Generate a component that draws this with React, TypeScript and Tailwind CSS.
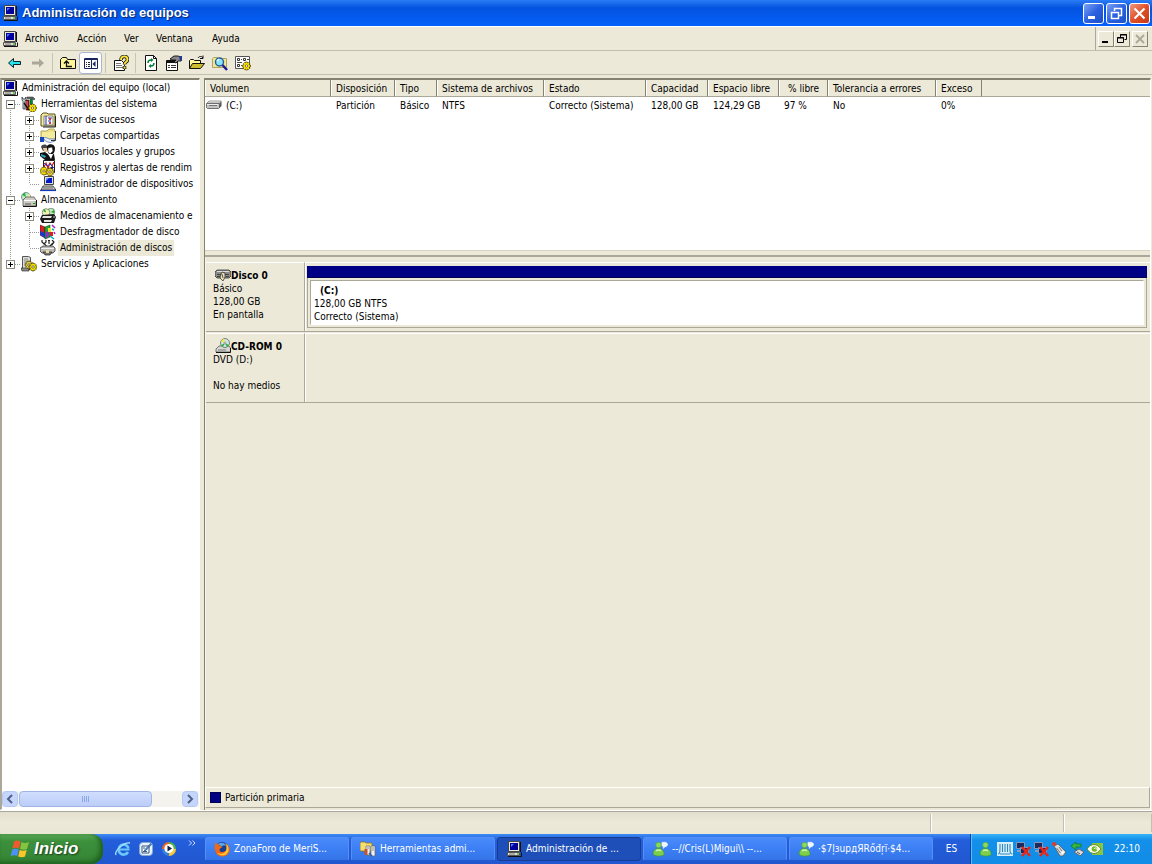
import React from "react";

type P = { children: React.ReactNode; className?: string };

function Icon({ children, className = "h-4 w-4" }: P) {
  return (
    <svg viewBox="0 0 16 16" className={`shrink-0 ${className}`} aria-hidden="true">
      {children}
    </svg>
  );
}

const Gear = ({ x, y, fill = "#ffe400" }: { x: number; y: number; fill?: string }) => (
  <g transform={`translate(${x} ${y})`}>
    <path d="M3 0h2v1l1-.5 1.200 1.200-.6 1.300h1.400v2H6.600l.6 1.300L6 7.500 5 7v1H3V7l-1 .5L.8 6.300 1.400 5H0V3h1.400L.8 1.700 2 .5l1 .5z" fill={fill} stroke="#3a3000" strokeWidth=".6" />
    <circle cx="4" cy="4" r="1.200" fill="#fff" stroke="#3a3000" strokeWidth=".6" />
  </g>
);

const Computer = ({ className }: { className?: string }) => (
  <Icon className={className}>
    <path d="M2.500.5h11v10h-11z" fill="#ece9d8" stroke="#444" />
    <path d="M4 2h8v7H4z" fill="#00009c" />
    <path d="M5 3h3L5 6z" fill="#4a74f0" />
    <path d="M1.500 11.500h12v3h-12z" fill="#e4e1d4" stroke="#555" />
    <path d="M3 13h6" stroke="#777" />
    <path d="M11 13h2" stroke="#0a0" />
    <path d="M2 15.500h13.500v-4M14.500 1v10" stroke="#111" fill="none" />
  </Icon>
);
const Tools = () => (
  <Icon>
    <path d="M1 1l1 2h2l1-2v3L4 5.500V13H2V5.500L1 4z" fill="#c4d8d8" stroke="#223" strokeWidth=".7" />
    <path d="M5 4h3v10H5z" fill="#b01010" stroke="#300" strokeWidth=".6" />
    <path d="M6 5v8" stroke="#f08080" />
    <path d="M6 1h6l2 2-1 1-2-1.500H6z" fill="#666" stroke="#222" strokeWidth=".5" />
    <path d="M9 3h2.500v7H9z" fill="#008a3c" stroke="#042" strokeWidth=".5" />
    <path d="M3 7l5 7" stroke="#111" strokeWidth="1.300" />
    <Gear x={7.500} y={8} />
  </Icon>
);
const EventLog = () => (
  <Icon>
    <path d="M1 3l2-2h4l1 1h7v12H1z" fill="#f5eb9b" stroke="#55501a" />
    <path d="M4 4h9v9H4z" fill="#fff" stroke="#666" strokeWidth=".8" />
    <path d="M6 4v9M8 6h4M8 9h3" stroke="#2232a8" />
    <path d="M9 6h2v2H9zM9 10h2v2H9z" fill="#e03030" />
    <path d="M15.500 4v11H3" fill="none" stroke="#222" />
  </Icon>
);
const Share = () => (
  <Icon>
    <path d="M1 3h6l2-2h5l1 2v9H1z" fill="#eee08a" stroke="#a2943a" strokeWidth=".8" />
    <path d="M2 4h13v6H2z" fill="#f5eb9c" />
    <path d="M3 10c3-1 4 0 6 1h6v2l-5 1.500-4-1z" fill="#e8f1fb" stroke="#4e6ea5" strokeWidth=".7" />
    <path d="M0 9h4v5H0z" fill="#1646c0" />
    <path d="M15.500 3v9.500H11" fill="none" stroke="#333" />
  </Icon>
);
const Users = () => (
  <Icon>
    <path d="M1 3c1-3 5-3 6-1v5H3z" fill="#444" />
    <path d="M3 4h4v4H4z" fill="#e9c8a0" />
    <path d="M7 2c2-3 8-2 8 2 0 3-1 5-2 6H9L7 5z" fill="#111" />
    <path d="M8 4l4-1 1 4-3 3-2-2z" fill="#fff" stroke="#222" strokeWidth=".5" />
    <path d="M0 9l5-1 4 3 5-1 1 6H5L0 12z" fill="#111" />
    <path d="M8 10l3 5 2-5z" fill="#fff" />
    <path d="M1 10l5 2-1 2-4-2z" fill="#2aa4b8" />
  </Icon>
);
const PerfLogs = () => (
  <Icon>
    <path d="M3.500.500h11v12h-11z" fill="#fff" stroke="#222" />
    <path d="M4 7l2-4 2 5 2-5 2 3 2-4" fill="none" stroke="#d00000" strokeWidth="1.100" />
    <path d="M4 3l3 3 3-2 4 4" fill="none" stroke="#2244d0" />
    <Gear x={0} y={7} />
    <path d="M8 9l5-3v8H9z" fill="#1d1d60" />
    <Gear x={6} y={8} fill="#e8cd33" />
  </Icon>
);
const Devices = () => (
  <Icon>
    <path d="M4.500.500h9v8h-9z" fill="#ddd" stroke="#444" />
    <path d="M6 2h6v5H6z" fill="#0018c8" />
    <path d="M6 2h3l-3 3z" fill="#6d92ff" />
    <path d="M3 10h10l3 4H1z" fill="#cfcfc8" stroke="#222" strokeWidth=".8" />
    <path d="M3 12h10" stroke="#666" />
    <path d="M0 14.500h16" stroke="#1038c0" strokeWidth="1.200" />
  </Icon>
);
const Storage = () => (
  <Icon>
    <circle cx="5" cy="5" r="4.500" fill="#c4ecc9" stroke="#678" strokeWidth=".8" />
    <path d="M5 5L1 3l3-2.500zM5 5l4 2-1 2z" fill="#26b33c" />
    <path d="M5 5L8.500 2l1 3z" fill="#f6f19b" />
    <path d="M2 8l3-3h8l2 3v6H2z" fill="#cfccc4" stroke="#555" strokeWidth=".8" />
    <path d="M3 8.500h12" stroke="#fff" />
    <path d="M2 14.500h13.500V8" stroke="#111" fill="none" />
    <path d="M4 12h6" stroke="#555" />
    <path d="M12 11h2v1h-2z" fill="#0a0" />
  </Icon>
);
const Removable = () => (
  <Icon>
    <circle cx="11" cy="4" r="3.800" fill="#bfe9be" stroke="#575" strokeWidth=".7" />
    <circle cx="6" cy="4.500" r="3.800" fill="#f1f3b0" stroke="#575" strokeWidth=".7" />
    <path d="M6 4.500L3 3l2-2zM11 4l3-2v3z" fill="#20a038" />
    <path d="M2 7l12-1 2 3-2 6H2l-2-4z" fill="#1b1b1b" />
    <path d="M3 8h9l-1 2H2zM4 12h8l-1 2H4z" fill="#e6e6e2" />
    <path d="M13 9h2" stroke="#ccc" />
  </Icon>
);
const Defrag = () => (
  <Icon>
    <path d="M0 1l5 2v11l-5-3z" fill="#d82020" stroke="#400" strokeWidth=".5" />
    <path d="M5 3l5-2v12l-5 2z" fill="#18a83c" stroke="#030" strokeWidth=".5" />
    <path d="M0 7l5 2v5l-5-3z" fill="#2038c8" />
    <path d="M6 8l3-1v5l-3 2z" fill="#9b2cc0" />
    <path d="M8 4h3v4H8z" fill="#f4e327" />
    <path d="M10 8h3v4h-3z" fill="#d82020" />
    <path d="M12 1l3 3M14 8l1 2" stroke="#b020c0" strokeWidth="1.500" />
    <path d="M10 12l4 3M12 5l2 1" stroke="#00a8b8" strokeWidth="1.500" />
  </Icon>
);
const DiskMgmt = () => (
  <Icon>
    <path d="M2 0v2l2 2 2-2V0M9 0v4M8 .5h2M12 0l2 2-2 3M4 3l3 4M13 3l-4 4" fill="none" stroke="#222" strokeWidth="1.200" />
    <path d="M3 6h10l2 2v3l-2 2H2L0 11V8z" fill="#b8b8b4" stroke="#333" strokeWidth=".8" />
    <path d="M1 8.500h13" stroke="#eee" />
    <path d="M3 12h9l-2 3H5z" fill="#777" stroke="#222" strokeWidth=".7" />
    <path d="M6 10h3v3H6z" fill="#e9dc9a" />
  </Icon>
);
const Services = () => (
  <Icon>
    <path d="M1.500.500h6l2 1v12h-8z" fill="#deddd5" stroke="#555" />
    <path d="M3 3h4M3 5h4M3 7h4" stroke="#888" />
    <path d="M0 12h8v3H1z" fill="#8c8c88" stroke="#222" strokeWidth=".6" />
    <Gear x={4} y={5} fill="#d8c850" />
    <Gear x={8} y={7} fill="#f0e000" />
  </Icon>
);
const Drive = () => (
  <Icon>
    <path d="M1 5l2-2h12l-1 2z" fill="#f2f2f2" stroke="#777" strokeWidth=".7" />
    <path d="M.5 5.500h13v4l-1 1h-11l-1-1z" fill="#c3c3c3" stroke="#555" strokeWidth=".8" />
    <path d="M14 5l1.500-2v5L13 10.500z" fill="#555" />
    <path d="M3 7.500h8" stroke="#777" />
    <path d="M1 6.500h11" stroke="#eee" />
  </Icon>
);
const Disk = () => (
  <Icon>
    <path d="M0 5l2-2h12l2 2v4l-2 2H2L0 9z" fill="#8c8c8c" stroke="#333" strokeWidth=".8" />
    <path d="M2 4.500h12" stroke="#ddd" />
    <path d="M2 7.500h4M10 7.500h4M2 9.500h3M11 9.500h3" stroke="#444" />
    <path d="M7 5l3 1v4l-2 4-3-3 1-4z" fill="#eee3b2" stroke="#333" strokeWidth=".8" />
    <path d="M7 7l1 4" stroke="#555" />
  </Icon>
);
const CdRom = () => (
  <Icon>
    <path d="M1 11l3-3h10l1.500 2v4H1z" fill="#d8d8d4" stroke="#555" strokeWidth=".8" />
    <path d="M1 14.500h14.500V10" stroke="#111" fill="none" />
    <path d="M3 12h8" stroke="#777" />
    <circle cx="10" cy="5" r="4.500" fill="#cfe7e3" stroke="#555" strokeWidth=".7" />
    <path d="M10 5L6 3l3-2.500z" fill="#f0e840" />
    <path d="M10 5l4 2-2 2.200zM10 5L6 7l2 2z" fill="#2fb048" />
    <circle cx="10" cy="5" r="1" fill="#fff" stroke="#555" strokeWidth=".5" />
  </Icon>
);

const Back = () => (
  <Icon><path d="M1.500 8L6.500 3.500v3h7v3h-7v3z" fill="#22e6ee" stroke="#08252b" strokeLinejoin="round" /></Icon>
);
const Forward = () => (
  <Icon><path d="M14 8L9 3.500v3H2v3h7v3z" fill="#aaa79b" /></Icon>
);
const UpFolder = () => (
  <Icon>
    <path d="M.5 4.500l2-2h4l1 2h8v9H.500z" fill="#fff59b" stroke="#111" />
    <path d="M6.500 6v5.500H12M4 8.500L6.500 6 9 8.500" fill="none" stroke="#111" strokeWidth="1.300" />
  </Icon>
);
const ShowTree = () => (
  <Icon>
    <path d="M1.500 3.500h13v10h-13z" fill="#fff" stroke="#16255f" />
    <path d="M2 4h12v1H2z" fill="#16255f" />
    <path d="M8.500 4v9" stroke="#16255f" />
    <path d="M3 7.500h1m1 0h2M3 9.500h1m1 0h2M3 11.500h1m1 0h2" stroke="#222" />
    <path d="M12.500 6v6l-3-3z" fill="#16255f" />
  </Icon>
);
const HelpSheet = () => (
  <Icon>
    <path d="M1.500 5.500h7l3 3v7h-10z" fill="#fff" stroke="#111" />
    <path d="M3 8.500h5M3 10.500h6M3 12.500h7" stroke="#777" />
    <path d="M8 5c0-5 6.500-4.500 6.500-.500 0 3-3 2-3 5M11.500 11v3" fill="none" stroke="#222" strokeWidth="3.600" />
    <path d="M8 5c0-5 6.500-4.500 6.500-.500 0 3-3 2-3 5M11.500 11.500v2" fill="none" stroke="#ffe736" strokeWidth="1.900" />
  </Icon>
);
const Refresh = () => (
  <Icon>
    <path d="M2.500.5h8l3 3v12h-11z" fill="#fff" stroke="#111" />
    <path d="M10.500.500v3h3" fill="none" stroke="#111" />
    <path d="M5 8c0-2 1-3 3-3M11 8c0 2-1 3-3 3" fill="none" stroke="#008038" strokeWidth="1.400" />
    <path d="M8 3v4l2.500-2zM8 9v4l-2.500-2z" fill="#008038" />
  </Icon>
);
const Props = () => (
  <Icon>
    <path d="M.5 5.500h11v10H.500z" fill="#fff" stroke="#111" />
    <path d="M1 6h10v2H1z" fill="#111" />
    <path d="M2 10.500h2m1 0h5M2 12.500h2m1 0h5" stroke="#333" />
    <path d="M4 4l4-3h4l3 1v4h-3l-2 2-2-1 2-2H6z" fill="#888" stroke="#111" strokeWidth=".9" />
    <path d="M13 1h3v5h-2z" fill="#25368b" />
  </Icon>
);
const OpenFolder = () => (
  <Icon>
    <path d="M.5 13.500v-8l1-1h3l1 1h6v3" fill="#fff59b" stroke="#111" />
    <path d="M.500 13.500l3-5h12l-4 5z" fill="#cdbd2e" stroke="#111" />
    <path d="M9 3c1-2 4-2 5 0m0-2.500v3h-3" fill="none" stroke="#111" />
  </Icon>
);
const Find = () => (
  <Icon>
    <path d="M.500 12.500v-9l1-1h4l1 1h8v9z" fill="#efe699" stroke="#b1a55a" />
    <circle cx="7.500" cy="7" r="4" fill="#8ce3fb" stroke="#235b9b" strokeWidth="1.400" />
    <path d="M5 6l2-2" stroke="#fff" strokeWidth="1.200" />
    <path d="M10.500 10l4.500 5" stroke="#1c1c94" strokeWidth="2.400" />
  </Icon>
);
const Settings = () => (
  <Icon>
    <path d="M.500 1.500h14v12H.500z" fill="#fff" stroke="#555" />
    <path d="M2.500 3.500h2v2h-2zM2.500 9.500h2v2h-2zM8.500 3.500h2v2h-2z" fill="none" stroke="#333" />
    <path d="M6 4.500h1M6 10.500h1M12 4.500h2M2 7.500h5" stroke="#444" />
    <Gear x={7.500} y={7} />
  </Icon>
);

const IE = () => (
  <Icon>
    <path d="M13 11a5 5 0 1 1 .5-3.500" fill="none" stroke="#68c8fb" strokeWidth="2.600" />
    <path d="M1 14C-1 10 9 1 15 2" fill="none" stroke="#a9e2fe" strokeWidth="1.300" />
    <path d="M4 8.500h10.500" stroke="#68c8fb" strokeWidth="2" />
  </Icon>
);
const Desktop = () => (
  <Icon>
    <rect x="1.500" y="1.500" width="13" height="13" rx="3.500" fill="#e9f2fc" stroke="#86aad8" />
    <path d="M4 5h7v7H4z" fill="#fff" stroke="#345480" />
    <path d="M7 8.500l5.500-6 1 1-5.500 6-2 1z" fill="#4f8fd0" stroke="#244876" strokeWidth=".6" />
    <path d="M5 10.500h4M5 7h2" stroke="#2f5c94" />
  </Icon>
);
const Media = () => (
  <Icon>
    <path d="M8 1a7 7 0 0 1 7 7H8z" fill="#4eb748" />
    <path d="M8 1a7 7 0 0 0-7 7h7z" fill="#f0641e" />
    <path d="M1 8a7 7 0 0 0 7 7V8z" fill="#3780e1" />
    <path d="M15 8a7 7 0 0 1-7 7V8z" fill="#f7c832" />
    <circle cx="8" cy="7.500" r="4.600" fill="#fff" />
    <path d="M6.500 4.500l4.500 3-4.500 3z" fill="#10204a" />
  </Icon>
);
const Firefox = () => (
  <Icon>
    <circle cx="8" cy="8" r="7" fill="#173e91" />
    <path d="M4 3c3-2 7-2 8 2-3-1-4 0-4 1z" fill="#5ba7e9" />
    <path d="M1.500 1.500c1 1 2 1.500 3 1.500 1 2 2 2 4 3-1 1-3 1-3 3s3 3 6 1c2-2 1-5-.5-8 5 2 6 8 3 11-4 4-10 3-12-1C0 8 .5 5 1.500 1.500z" fill="#ef6a16" />
    <path d="M12.500 3c3 3 3 9-1.500 11-3 1-6 0-8-2 5 2 9 0 9.500-4z" fill="#ffc52f" />
  </Icon>
);
const AdminTools = () => (
  <Icon>
    <path d="M0 2l1-1h4l1 1h6v8H0z" fill="#f5dc73" stroke="#8c731c" strokeWidth=".8" />
    <path d="M6 5h4v9H6zM11 5h4v10h-4z" fill="#f1f1ed" stroke="#666" strokeWidth=".7" />
    <path d="M7 7h2M12 7h2M12 9h2" stroke="#888" />
    <path d="M4.500 8h3v6h-3z" fill="#c4542d" />
    <path d="M9 12l3 3" stroke="#395c9d" strokeWidth="1.500" />
  </Icon>
);
const Buddy = ({ bubble = false }: { bubble?: boolean }) => (
  <Icon>
    {bubble && <path d="M10 1h4l2 2v1l-2 2h-1l-2 2V6L9 4z" fill="#eef7ff" stroke="#9bc2ee" strokeWidth=".5" />}
    <circle cx="6.500" cy="4" r="2.800" fill="#8ad85c" stroke="#4c9f35" strokeWidth=".6" />
    <path d="M1.500 14c-1-4 1-5 3-6.500h4c2 1.500 4 2.500 3.500 6.500-3 1.500-7.500 1.500-10.500 0z" fill="#7dce4b" stroke="#3d9230" strokeWidth=".6" />
    <path d="M4 10c2-1.500 3.500-1.500 5 0" fill="none" stroke="#d1f6b1" strokeWidth="1.400" />
  </Icon>
);
const Modem = () => (
  <Icon>
    <path d="M0 1h16v14H0z" fill="#d7effb" />
    <path d="M1 13c2 0 2-2 2-8V3M5.500 3v8M8 3v8M10.500 3v8M13 3v6c0 3 1 4 2.500 4M3 13h10" fill="none" stroke="#2f87bd" strokeWidth="1.100" />
  </Icon>
);
const NetOff = () => (
  <Icon>
    <path d="M1.500 1.500h8v6h-8zM5.500 6.500h8v6h-8z" fill="#1b2a5c" stroke="#8798bd" />
    <path d="M2 9h3v2H2z" fill="#8a9bbd" />
    <path d="M7 6l8 9M15 6l-8 9" stroke="#e62618" strokeWidth="2.600" />
  </Icon>
);
const UsbPen = () => (
  <Icon>
    <path d="M3 5l4-2 8 8-3 4H9z" fill="#d9dbdc" stroke="#555" strokeWidth=".8" />
    <path d="M8 6l3 4M5.500 7l4 5" stroke="#777" />
    <circle cx="3" cy="3" r="2" fill="#e33a24" />
    <path d="M10 11l3-1v2l-2 1z" fill="#fff" />
  </Icon>
);
const Eject = () => (
  <Icon>
    <path d="M5 11l5-3 5 3-4 4z" fill="#d5d9dc" stroke="#555" strokeWidth=".8" />
    <path d="M2 5l5-4v2h5v3H7v3z" fill="#36b83c" stroke="#136f20" strokeWidth=".7" />
    <path d="M8 11l3 2" stroke="#555" />
  </Icon>
);
const Nvidia = () => (
  <Icon>
    <path d="M5 2h11v12H5z" fill="#8cc43c" />
    <path d="M0 8c4-6 10-6 14 0-4 6-10 6-14 0z" fill="#f5fbe9" stroke="#5f9127" />
    <circle cx="7.500" cy="8" r="2.800" fill="#78b52a" />
    <path d="M7 8c1-2 4-1 3 1" stroke="#fff" fill="none" />
  </Icon>
);
const Flag = () => (
  <svg viewBox="0 0 20 20" className="h-5 w-5 shrink-0" aria-hidden="true">
    <path d="M4 2.500q3-2 6.500 0L9 9.500q-3-1.500-6.500 0z" fill="#f0592b" />
    <path d="M11.500 3q3 2 7.500 0L17 10q-3 1.500-7 0z" fill="#86c440" />
    <path d="M2.200 10.500q3-1.500 6.500 0L7.200 17q-3-1.500-6.500 0z" fill="#4b92f3" />
    <path d="M9.700 11q3 1.500 7 0L15 17.500q-3 1.500-6.800 0z" fill="#fcc62b" />
  </svg>
);

type Branch = "line" | "tee" | "end" | "plus" | "minus" | "plusEnd";

function Guide({ kind, first = false }: { kind: Branch; first?: boolean }) {
  const box = kind === "plus" || kind === "minus" || kind === "plusEnd";
  const down = kind !== "end" && kind !== "plusEnd";
  return (
    <svg viewBox="0 0 19 16" className="h-4 w-[19px] shrink-0" shapeRendering="crispEdges" aria-hidden="true">
      <path d={`M8.500 ${first ? 8 : 0}V${down ? 16 : 8}`} stroke="#9a9a9a" strokeDasharray="1 1" />
      {kind !== "line" && <path d="M9 8.500h9" stroke="#9a9a9a" strokeDasharray="1 1" />}
      {box && <rect x="4.500" y="4.500" width="8" height="8" fill="#fff" stroke="#8c8c80" />}
      {box && <path d="M6 8.500h5" stroke="#000" />}
      {(kind === "plus" || kind === "plusEnd") && <path d="M8.500 6v5" stroke="#000" />}
    </svg>
  );
}

const tree: { label: string; icon: () => React.ReactElement; guides: Branch[]; selected?: boolean }[] = [
  { label: "Administración del equipo (local)", icon: Computer, guides: [] },
  { label: "Herramientas del sistema", icon: Tools, guides: ["minus"] },
  { label: "Visor de sucesos", icon: EventLog, guides: ["line", "plus"] },
  { label: "Carpetas compartidas", icon: Share, guides: ["line", "plus"] },
  { label: "Usuarios locales y grupos", icon: Users, guides: ["line", "plus"] },
  { label: "Registros y alertas de rendim", icon: PerfLogs, guides: ["line", "plus"] },
  { label: "Administrador de dispositivos", icon: Devices, guides: ["line", "end"] },
  { label: "Almacenamiento", icon: Storage, guides: ["minus"] },
  { label: "Medios de almacenamiento e", icon: Removable, guides: ["line", "plus"] },
  { label: "Desfragmentador de disco", icon: Defrag, guides: ["line", "tee"] },
  { label: "Administración de discos", icon: DiskMgmt, guides: ["line", "end"], selected: true },
  { label: "Servicios y Aplicaciones", icon: Services, guides: ["plusEnd"] },
];

const columns = [
  { name: "Volumen", width: "w-[126px]", value: "(C:)" },
  { name: "Disposición", width: "w-[64px]", value: "Partición" },
  { name: "Tipo", width: "w-[42px]", value: "Básico" },
  { name: "Sistema de archivos", width: "w-[107px]", value: "NTFS" },
  { name: "Estado", width: "w-[102px]", value: "Correcto (Sistema)" },
  { name: "Capacidad", width: "w-[62px]", value: "128,00 GB" },
  { name: "Espacio libre", width: "w-[71px]", value: "124,29 GB" },
  { name: "% libre", width: "w-[49px]", value: "97 %" },
  { name: "Tolerancia a errores", width: "w-[108px]", value: "No" },
  { name: "Exceso", width: "w-[46px]", value: "0%" },
];

const menus = [
  { name: "Archivo", width: "w-[52px]" },
  { name: "Acción", width: "w-[47px]" },
  { name: "Ver", width: "w-8" },
  { name: "Ventana", width: "w-14" },
  { name: "Ayuda", width: "w-12" },
];

function ToolButton({ label, children, pressed = false }: { label: string; children: React.ReactNode; pressed?: boolean }) {
  return (
    <button
      aria-label={label}
      className={`flex h-[22px] w-[23px] items-center justify-center ${pressed ? "rounded-[3px] border border-[#a9b5cc] bg-white" : ""}`}
    >
      {children}
    </button>
  );
}

const Separator = () => <div className="mx-[3px] h-5 w-px bg-[#c9c5b2]" />;

function CaptionButton({ label, close = false, children }: { label: string; close?: boolean; children: React.ReactNode }) {
  return (
    <button
      aria-label={label}
      className={`flex h-[21px] w-[21px] items-center justify-center rounded-[3px] border border-white ${close ? "bg-linear-to-br from-[#f0977a] via-[#e0502a] to-[#c53a10]" : "bg-linear-to-br from-[#7ba3f4] via-[#2d62e0] to-[#1b50c8]"}`}
    >
      <svg viewBox="0 0 19 19" className="h-[19px] w-[19px]" fill="none" stroke="#fff" aria-hidden="true">{children}</svg>
    </button>
  );
}

function MdiButton({ label, children }: { label: string; children: React.ReactNode }) {
  return (
    <button aria-label={label} className="flex h-4 w-4 items-center justify-center border border-t-white border-l-white border-r-[#85826f] border-b-[#85826f]">
      <svg viewBox="0 0 14 14" className="h-[14px] w-[14px]" fill="none" stroke="#000" aria-hidden="true">{children}</svg>
    </button>
  );
}

function ScrollButton({ label, d }: { label: string; d: string }) {
  return (
    <button aria-label={label} className="flex h-4 w-4 shrink-0 items-center justify-center rounded-sm border border-[#b4c8f4] bg-[#c6d5fb]">
      <svg viewBox="0 0 10 10" className="h-2.5 w-2.5" fill="none" stroke="#4d6185" strokeWidth="2" aria-hidden="true"><path d={d} /></svg>
    </button>
  );
}

function TaskButton({ label, active = false, children }: { label: string; active?: boolean; children: React.ReactNode }) {
  return (
    <button
      className={`flex h-6 max-w-[144px] min-w-0 flex-1 items-center gap-1 rounded-[3px] border px-2 text-white ${active ? "border-[#173c94] bg-[#1e4fb8]" : "border-[#5590fa] border-b-[#245bcf] bg-linear-to-b from-[#4a8bfb] via-[#3c7ff4] to-[#3474e8]"}`}
    >
      {children}
      <span className="truncate">{label}</span>
    </button>
  );
}

function DiskRow({ name, icon, lines, children }: { name: string; icon: React.ReactNode; lines: string[]; children?: React.ReactNode }) {
  return (
    <section className="mb-px flex h-[70px] border-b border-[#aca899]">
      <div className="w-[99px] shrink-0 border-t border-r border-t-white border-r-[#aca899] pt-[5px] pl-[7px] leading-[13px]">
        <h2 className="flex h-[14px] items-center pl-0.5 font-bold">{icon}{name}</h2>
        {lines.map((l, i) => <p key={i} className="h-[13px]">{l}</p>)}
      </div>
      <div className="min-w-0 flex-1 border-t border-l border-white">{children}</div>
    </section>
  );
}

export default function App() {
  return (
    <div className="flex h-screen flex-col overflow-hidden bg-[#ece9d8] text-[10px] leading-4 whitespace-nowrap text-black" style={{ fontFamily: '"DejaVu Sans Condensed", "Liberation Sans", sans-serif' }}>
      <header className="flex h-[26px] shrink-0 items-center gap-1 bg-linear-to-b from-[#2b7cf5] via-[#0453e0] via-30% to-[#0461fb] pr-0.5 pl-0.5">
        <Computer />
        <h1 className="flex-1 text-[13px] font-bold text-white [font-family:'Liberation_Sans',sans-serif] [text-shadow:1px_1px_1px_#0a246a]">Administración de equipos</h1>
        <div className="flex gap-0.5">
          <CaptionButton label="Minimizar"><path d="M4 13.500h7" strokeWidth="3" /></CaptionButton>
          <CaptionButton label="Restaurar"><path d="M7.500 7V4.500h7v7H12M4.500 8.500h7v6h-7zM4 8.500h8M7 4.500h8" strokeWidth="1.500" /></CaptionButton>
          <CaptionButton label="Cerrar" close><path d="M4.500 4.500l10 10M14.500 4.500l-10 10" strokeWidth="2.200" /></CaptionButton>
        </div>
      </header>

      <nav className="flex h-[25px] shrink-0 items-center border-t border-b border-t-white border-b-[#c3bfae] pl-0.5">
        <Computer />
        <div className="flex flex-1 pl-[7px]">
          {menus.map((m) => <button key={m.name} className={`${m.width} text-left`}>{m.name}</button>)}
        </div>
        <div className="flex h-full items-center border-l border-[#aca899] pr-1 pl-0.5">
          <MdiButton label="Minimizar consola"><path d="M3 10h6" strokeWidth="2" /></MdiButton>
          <MdiButton label="Restaurar consola"><path d="M5.500 5V2.500h6v5H9.500M2.500 5.500h6v5h-6zM2 6h7M5 3h7" /></MdiButton>
          <div className="w-0.5" />
          <MdiButton label="Cerrar consola"><path d="M3 3l8 8M11 3l-8 8" stroke="#aca899" strokeWidth="1.800" /></MdiButton>
        </div>
      </nav>

      <div role="toolbar" className="mb-[3px] flex h-6 shrink-0 items-center border-b border-[#c3bfae] pl-[3px]">
        <ToolButton label="Atrás"><Back /></ToolButton>
        <ToolButton label="Adelante"><Forward /></ToolButton>
        <Separator />
        <ToolButton label="Subir un nivel"><UpFolder /></ToolButton>
        <ToolButton label="Mostrar árbol" pressed><ShowTree /></ToolButton>
        <Separator />
        <ToolButton label="Ayuda"><HelpSheet /></ToolButton>
        <Separator />
        <ToolButton label="Actualizar"><Refresh /></ToolButton>
        <ToolButton label="Propiedades"><Props /></ToolButton>
        <ToolButton label="Abrir"><OpenFolder /></ToolButton>
        <ToolButton label="Buscar"><Find /></ToolButton>
        <ToolButton label="Configuración"><Settings /></ToolButton>
      </div>

      <main className="flex min-h-0 flex-1 gap-1 border-b border-white pr-px">
        <aside className="flex w-[200px] shrink-0 flex-col border-t-2 border-r border-b border-l-2 border-t-[#85826f] border-r-white border-b-white border-l-[#aca899] bg-white">
          <ul className="min-h-0 flex-1 overflow-hidden">
            {tree.map((n, i) => (
              <li key={n.label} className="flex h-4 items-center">
                {n.guides.map((g, j) => <Guide key={j} kind={g} first={i === 1} />)}
                <n.icon />
                <span className={`ml-0.5 pl-0.5 ${n.selected ? "bg-[#ece9d8] pr-0.5" : ""}`}>{n.label}</span>
              </li>
            ))}
          </ul>
          <div className="mb-0.5 flex h-4 shrink-0 bg-[#f4f3ee] pr-px">
            <ScrollButton label="Desplazar a la izquierda" d="M7 1L3 5l4 4" />
            <div className="ml-px flex w-[133px] items-center justify-center gap-px rounded-sm border border-[#9fb5e8] bg-linear-to-b from-[#d0defd] to-[#bccdf8]">
              {[0, 1, 2, 3].map((k) => <i key={k} className="h-1.5 w-px bg-[#8ea9e6]" />)}
            </div>
            <div className="flex-1" />
            <ScrollButton label="Desplazar a la derecha" d="M3 1l4 4-4 4" />
          </div>
        </aside>

        <div className="flex min-w-0 flex-1 flex-col border-t-2 border-r border-l border-t-[#85826f] border-r-white border-l-[#85826f]">
          <div className="h-[170px] shrink-0 overflow-hidden bg-white">
            <table className="w-full table-fixed border-separate border-spacing-0 text-left">
              <thead>
                <tr className="h-[17px] bg-[#ece9d8]">
                  {columns.map((c) => (
                    <th key={c.name} scope="col" className={`${c.width} border-r border-b border-r-[#85826f] border-b-[#aca899] p-0 font-normal`}>
                      <div className={`h-4 overflow-hidden border-l border-white pt-px ${c.name === "% libre" ? "pl-2" : "pl-1"}`}>{c.name}</div>
                    </th>
                  ))}
                  <th scope="col" aria-label="Relleno" className="border-b border-[#aca899] p-0" />
                </tr>
              </thead>
              <tbody>
                <tr className="h-[17px]">
                  {columns.map((c, i) => (
                    <td key={c.name} className="p-0 pl-[5px]">
                      {i === 0 ? <div className="-ml-1 flex items-center gap-1"><Drive />{c.value}</div> : c.value}
                    </td>
                  ))}
                  <td />
                </tr>
              </tbody>
            </table>
          </div>
          <div className="h-[7px] shrink-0 border-t border-b-2 border-t-[#d8d4c4] border-b-[#aca899]" />
          <div className="min-h-0 flex-1 border-l border-[#f7f5ec] pt-[5px]">
            <DiskRow name="Disco 0" icon={<Disk />} lines={["Básico", "128,00 GB", "En pantalla"]}>
              <div className="mt-[3px] mr-[3px] ml-px">
                <div className="h-3 border-b border-[#000050] bg-[#000084]" />
                <div className="h-[50px] border border-t-0 border-[#aca899] p-0.5">
                  <div className="h-full border border-[#aca899] border-r-white border-b-white bg-white pt-[3px] pl-[3px] leading-[13px]">
                    <h3 className="pl-1.5 font-bold">(C:)</h3>
                    <p>128,00 GB NTFS</p>
                    <p>Correcto (Sistema)</p>
                  </div>
                </div>
              </div>
            </DiskRow>
            <DiskRow name="CD-ROM 0" icon={<CdRom />} lines={["DVD (D:)", "", "No hay medios"]} />
          </div>
          <footer className="mb-0.5 flex h-[21px] shrink-0 items-center gap-1 border border-t-white border-r-[#aca899] border-b-[#aca899] border-l-white pl-1">
            <span className="h-[11px] w-[11px] border border-[#000050] bg-[#000084]" />
            <span>Partición primaria</span>
          </footer>
        </div>
      </main>

      <div role="status" className="flex h-[23px] shrink-0 border-t border-[#aca899] bg-linear-to-b from-[#e2dfcf] via-[#ece9d8] to-[#e9e6d6] py-0.5">
        <div className="flex-1 border-r border-[#c3bfae]" />
        <div className="w-[133px] border-r border-l border-r-[#c3bfae] border-l-white" />
        <div className="w-[88px] border-r border-l border-r-[#c3bfae] border-l-white" />
      </div>

      <footer className="flex h-[30px] shrink-0 items-center bg-linear-to-b from-[#3d8cf5] via-[#245edb] via-20% to-[#2157d0]">
        <button className="flex h-full w-[103px] items-center gap-1 rounded-r-xl bg-linear-to-b from-[#58a858] via-[#3c903c] via-25% to-[#358335] pl-2.5 text-[17px] leading-5 font-bold text-white italic shadow-[inset_-3px_-2px_5px_#1c5f1c] [font-family:'Liberation_Sans',sans-serif] [text-shadow:1px_1px_2px_#163d16]">
          <Flag />
          Inicio
        </button>
        <div className="flex w-[102px] items-center gap-[7px] pl-3">
          <button aria-label="Internet Explorer"><IE /></button>
          <button aria-label="Mostrar escritorio"><Desktop /></button>
          <button aria-label="Reproductor multimedia"><Media /></button>
          <button aria-label="Más iconos" className="mb-3 ml-1 text-white">
            <svg viewBox="0 0 8 6" className="h-1.5 w-2" fill="none" stroke="#cfe1ff" aria-hidden="true"><path d="M1 .5L3.500 3 1 5.500M4.500.500L7 3 4.500 5.500" /></svg>
          </button>
        </div>
        <div className="flex min-w-0 flex-1 gap-0.5">
          <TaskButton label="ZonaForo de MeriS..."><Firefox /></TaskButton>
          <TaskButton label="Herramientas admi..."><AdminTools /></TaskButton>
          <TaskButton label="Administración de ..." active><Computer /></TaskButton>
          <TaskButton label="--//Cris(L)Migui\\ --..."><Buddy bubble /></TaskButton>
          <TaskButton label="·$7ļзuрдЯRőđŗї·$4..."><Buddy bubble /></TaskButton>
        </div>
        <button className="w-[37px] text-center text-white">ES</button>
        <div className="flex h-full w-[182px] shrink-0 items-center gap-0.5 border-l border-[#0d3ea8] bg-linear-to-b from-[#35b4f8] via-[#1390ea] via-20% to-[#128ce6] pl-2 text-white shadow-[inset_1px_0_0_#4cc3fb]">
          <Buddy />
          <Modem />
          <NetOff />
          <NetOff />
          <UsbPen />
          <Eject />
          <Nvidia />
          <time className="flex-1 pr-3 text-right">22:10</time>
        </div>
      </footer>
    </div>
  );
}
